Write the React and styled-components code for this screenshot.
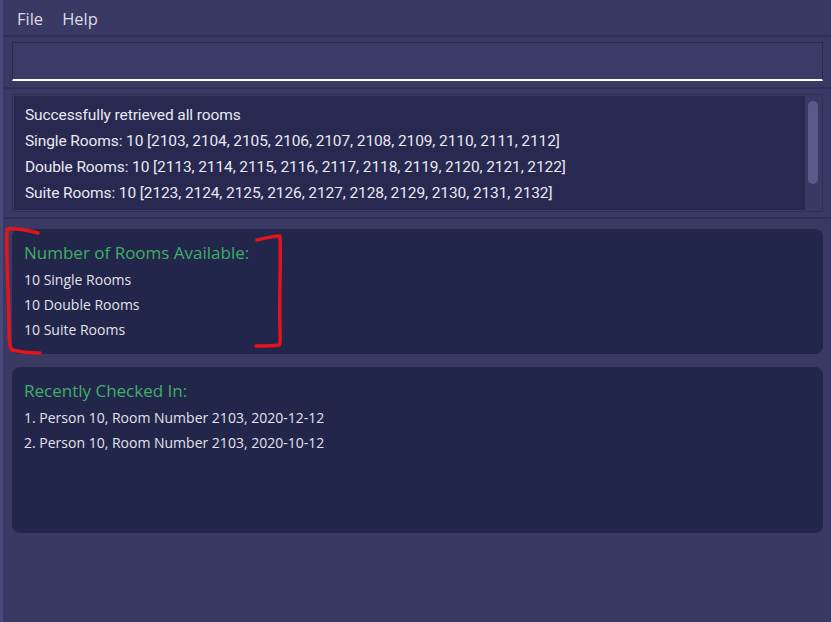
import styled, { createGlobalStyle } from 'styled-components';

const GlobalStyle = createGlobalStyle`
  html, body {
    margin: 0;
    padding: 0;
    background: #393963;
  }
  * {
    box-sizing: border-box;
  }
`;

const singles = [2103, 2104, 2105, 2106, 2107, 2108, 2109, 2110, 2111, 2112];
const doubles = [2113, 2114, 2115, 2116, 2117, 2118, 2119, 2120, 2121, 2122];
const suites = [2123, 2124, 2125, 2126, 2127, 2128, 2129, 2130, 2131, 2132];

const App = () => {
  return (
    <Window>
      <GlobalStyle />
      <MenuBar>
        <MenuItem>File</MenuItem>
        <MenuItem>Help</MenuItem>
      </MenuBar>
      <Section>
        <CommandBox />
      </Section>
      <Section bottom="5px">
        <ResultPanel>
          <ResultText>
            <Line>Successfully retrieved all rooms</Line>
            <Line>Single Rooms: 10 [{singles.join(', ')}]</Line>
            <Line>Double Rooms: 10 [{doubles.join(', ')}]</Line>
            <Line>Suite Rooms: 10 [{suites.join(', ')}]</Line>
          </ResultText>
          <Track>
            <Thumb />
          </Track>
        </ResultPanel>
      </Section>
      <Cards>
        <Card>
          <CardTitle>Number of Rooms Available:</CardTitle>
          <CardLine>10 Single Rooms</CardLine>
          <CardLine>10 Double Rooms</CardLine>
          <CardLine>10 Suite Rooms</CardLine>
        </Card>
        <Card tall>
          <CardTitle>Recently Checked In:</CardTitle>
          <CardLine>1. Person 10, Room Number 2103, 2020-12-12</CardLine>
          <CardLine>2. Person 10, Room Number 2103, 2020-10-12</CardLine>
        </Card>
      </Cards>
      <Marks width="831" height="622" viewBox="0 0 831 622">
        <path
          d="M38 233 C28 230 14 228 7 229 C6 260 9 300 9 330 C9 342 10 348 12 350 C20 352 30 353 40 353"
          fill="none"
          stroke="#e3141c"
          strokeWidth="3.5"
          strokeLinecap="round"
          strokeLinejoin="round"
        />
        <path
          d="M257 240 C266 238 273 236 280 236 C281 262 279 300 280 330 C280 338 281 343 279 345 C272 346 263 346 256 346"
          fill="none"
          stroke="#e3141c"
          strokeWidth="3.5"
          strokeLinecap="round"
          strokeLinejoin="round"
        />
      </Marks>
    </Window>
  );
};

const Window = styled.div`
  position: relative;
  width: 831px;
  height: 622px;
  overflow: hidden;
  background: #393963;
  border-left: 3px solid #48487a;
  font-family: 'Open Sans', 'Noto Sans', sans-serif;
  color: #e6e6ee;
`;

const MenuBar = styled.div`
  height: 37px;
  display: flex;
  align-items: center;
  gap: 19px;
  padding: 1px 0 0 14px;
  border-bottom: 2px solid #30305a;
`;

const MenuItem = styled.span`
  font-size: 16.5px;
  color: #dcdce6;
`;

const Section = styled.div`
  padding: 5px 8px ${(p) => p.bottom || '6px'} 9px;
  border-bottom: 2px solid #30305a;
`;

const CommandBox = styled.div`
  height: 39px;
  border: 1px solid #2b2b52;
  border-bottom: 2px solid #ffffff;
  background: #3b3b68;
`;

const ResultPanel = styled.div`
  height: 118px;
  display: flex;
  border: 1px solid #2e2e58;
  padding: 1px;
  background: #393963;
`;

const ResultText = styled.div`
  flex: 1;
  background: #282950;
  padding: 6px 11px;
  font-family: Roboto, 'Open Sans', sans-serif;
`;

const Line = styled.div`
  font-size: 15.5px;
  letter-spacing: -0.1px;
  line-height: 26px;
  white-space: nowrap;
  color: #e8e8f0;
`;

const Track = styled.div`
  width: 16px;
  padding: 5px 3px;
`;

const Thumb = styled.div`
  height: 83px;
  border-radius: 5px;
  background: #5a5a8a;
`;

const Cards = styled.div`
  display: flex;
  flex-direction: column;
  gap: 13px;
  padding: 10px 8px 0 9px;
`;

const Card = styled.div`
  height: ${(p) => (p.tall ? '166px' : '125px')};
  background: #23264b;
  border-radius: 8px;
  padding: 11px 12px;
`;

const CardTitle = styled.div`
  font-size: 17px;
  line-height: 26px;
  color: #3fae68;
  margin-bottom: 1px;
`;

const CardLine = styled.div`
  font-size: 14px;
  line-height: 25px;
  color: #e2e2ea;
`;

const Marks = styled.svg`
  position: absolute;
  left: -3px;
  top: 0;
  pointer-events: none;
`;

export default App;
